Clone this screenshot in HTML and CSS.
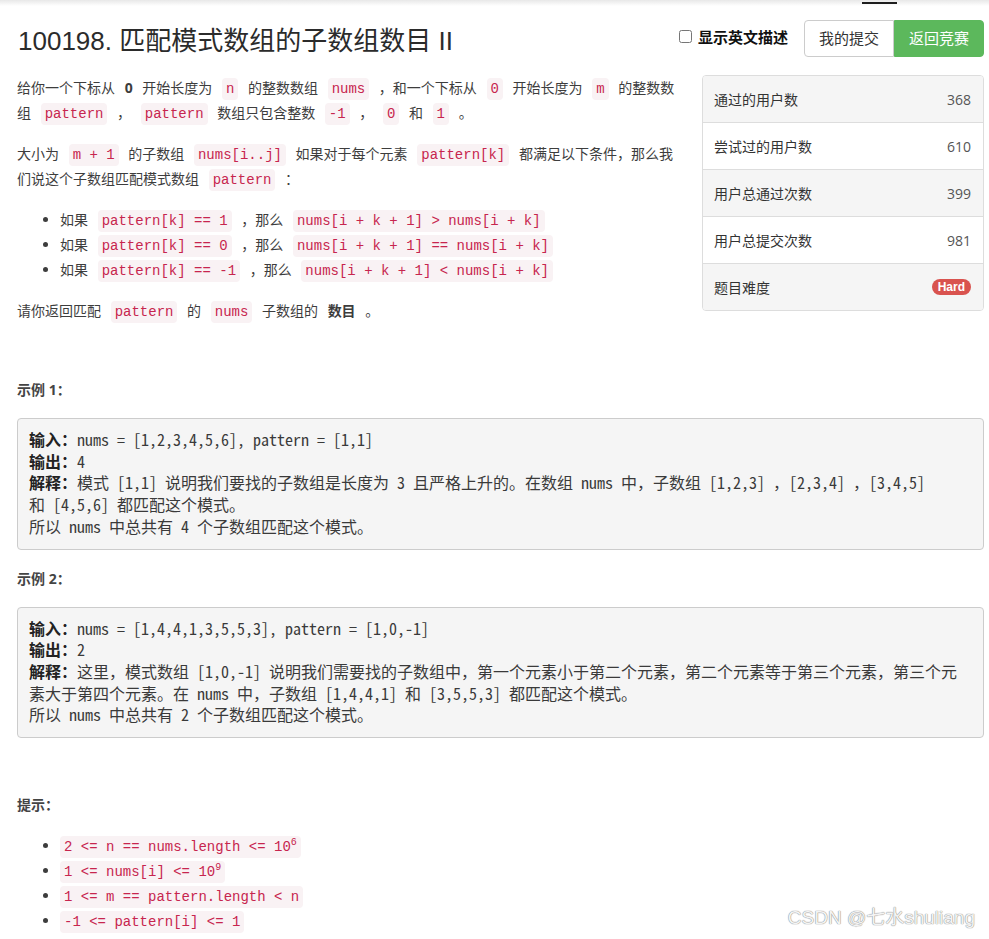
FILE: index.html
```html
<!DOCTYPE html>
<html lang="zh-CN">
<head>
<meta charset="utf-8">
<title>100198. 匹配模式数组的子数组数目 II</title>
<link rel="stylesheet" href="styles.css">
</head>
<body>
<div class="page">
  <div class="topbar"><span class="active-tab"></span></div>
  <div class="header">
    <h3 class="title">100198. 匹配模式数组的子数组数目 II</h3>
    <label class="toggle"><input type="checkbox" class="toggle-box">显示英文描述</label>
    <div class="btn-group">
      <a class="btn btn-default">我的提交</a>
      <a class="btn btn-success">返回竞赛</a>
    </div>
  </div>
  <div class="main">
    <div class="stats">
      <div class="stat-row"><span>通过的用户数</span><span class="num">368</span></div>
      <div class="stat-row"><span>尝试过的用户数</span><span class="num">610</span></div>
      <div class="stat-row"><span>用户总通过次数</span><span class="num">399</span></div>
      <div class="stat-row"><span>用户总提交次数</span><span class="num">981</span></div>
      <div class="stat-row"><span>题目难度</span><span class="badge">Hard</span></div>
    </div>
    <p>给你一个下标从 <strong>0</strong> 开始长度为 <code>n</code> 的整数数组 <code>nums</code> ，和一个下标从 <code>0</code> 开始长度为 <code>m</code> 的整数数组 <code>pattern</code> ， <code>pattern</code> 数组只包含整数 <code>-1</code> ， <code>0</code> 和 <code>1</code> 。</p>
    <p>大小为 <code>m + 1</code> 的子数组 <code>nums[i..j]</code> 如果对于每个元素 <code>pattern[k]</code> 都满足以下条件，那么我们说这个子数组匹配模式数组 <code>pattern</code> ：</p>
    <ul class="list">
      <li>如果 <code>pattern[k] == 1</code> ，那么 <code>nums[i + k + 1] &gt; nums[i + k]</code></li>
      <li>如果 <code>pattern[k] == 0</code> ，那么 <code>nums[i + k + 1] == nums[i + k]</code></li>
      <li>如果 <code>pattern[k] == -1</code> ，那么 <code>nums[i + k + 1] &lt; nums[i + k]</code></li>
    </ul>
    <p>请你返回匹配 <code>pattern</code> 的 <code>nums</code> 子数组的 <strong>数目</strong> 。</p>

    <p class="section-title spaced"><strong>示例 1：</strong></p>
    <pre class="example"><strong>输入：</strong>nums = [1,2,3,4,5,6], pattern = [1,1]
<strong>输出：</strong>4
<strong>解释：</strong>模式 [1,1] 说明我们要找的子数组是长度为 3 且严格上升的。在数组 nums 中，子数组 [1,2,3] ，[2,3,4] ，[3,4,5]
和 [4,5,6] 都匹配这个模式。
所以 nums 中总共有 4 个子数组匹配这个模式。</pre>

    <p class="section-title"><strong>示例 2：</strong></p>
    <pre class="example"><strong>输入：</strong>nums = [1,4,4,1,3,5,5,3], pattern = [1,0,-1]
<strong>输出：</strong>2
<strong>解释：</strong>这里，模式数组 [1,0,-1] 说明我们需要找的子数组中，第一个元素小于第二个元素，第二个元素等于第三个元素，第三个元
素大于第四个元素。在 nums 中，子数组 [1,4,4,1] 和 [3,5,5,3] 都匹配这个模式。
所以 nums 中总共有 2 个子数组匹配这个模式。</pre>

    <p class="section-title spaced"><strong>提示：</strong></p>
    <ul class="list list-last">
      <li><code>2 &lt;= n == nums.length &lt;= 10<sup>6</sup></code></li>
      <li><code>1 &lt;= nums[i] &lt;= 10<sup>9</sup></code></li>
      <li><code>1 &lt;= m == pattern.length &lt; n</code></li>
      <li><code>-1 &lt;= pattern[i] &lt;= 1</code></li>
    </ul>
  </div>
  <div class="watermark">CSDN @七水shuliang</div>
</div>
</body>
</html>
```

FILE: styles.css
```css
* {
  box-sizing: border-box;
}

html, body {
  margin: 0;
  background: #fff;
}

body {
  font-family: "Open Sans", "Noto Sans CJK SC", sans-serif;
  font-size: 14px;
  color: #333;
}

.page {
  position: relative;
  height: 939px;
  overflow: hidden;
}

.topbar {
  height: 6px;
  background: linear-gradient(#e8e8e8, #fff);
  display: flex;
  justify-content: flex-end;
  padding-right: 92px;
}

.active-tab {
  width: 35px;
  height: 2px;
  margin-top: 2px;
  background: #1e1e1e;
}

.header {
  display: flex;
  align-items: center;
  height: 64px;
  padding: 0 5px 0 18px;
}

.title {
  flex: 1;
  margin: 0;
  font-family: "Liberation Sans", "Noto Sans CJK SC", sans-serif;
  font-size: 26px;
  font-weight: 400;
  color: #2b2b2b;
}

.toggle {
  display: flex;
  align-items: center;
  font-size: 15px;
  font-weight: bold;
  color: #111;
  margin-right: 16px;
  margin-top: -3px;
}

.toggle-box {
  width: 13px;
  height: 13px;
  margin: 0 6px 0 0;
}

.btn-group {
  display: flex;
}

.btn {
  display: block;
  height: 37px;
  line-height: 35px;
  padding: 0 14px;
  font-size: 15px;
  border: 1px solid #ccc;
  text-decoration: none;
}

.btn-default {
  background: #fff;
  color: #333;
  border-radius: 4px 0 0 4px;
}

.btn-success {
  background: #5cb85c;
  border-color: #5cb85c;
  color: #fff;
  border-radius: 0 4px 4px 0;
}

.main {
  padding: 5px 5px 0 17px;
  color: #3d3d3d;
}

.stats {
  float: right;
  width: 282px;
  margin: 0 0 10px 19px;
  border: 1px solid #ddd;
  border-radius: 4px;
  overflow: hidden;
}

.stat-row {
  display: flex;
  justify-content: space-between;
  align-items: center;
  height: 47px;
  padding: 0 12px 0 11px;
  border-bottom: 1px solid #ddd;
  color: #333;
}

.stat-row:last-child {
  height: 46px;
  border-bottom: none;
}

.stat-row:nth-child(odd) {
  background: #f5f5f5;
}

.num {
  color: #555;
}

.badge {
  display: inline-block;
  background: #d9534f;
  color: #fff;
  font-family: "Liberation Sans", sans-serif;
  font-weight: bold;
  font-size: 12px;
  line-height: 16px;
  padding: 0 6px;
  border-radius: 9px;
}

p {
  margin: 0 0 16px;
  line-height: 25px;
}

.main p,
.list li {
  word-spacing: 6px;
}

.main .section-title {
  margin: 0 0 16px;
  word-spacing: normal;
}

.main .section-title.spaced {
  margin-top: 54px;
}

.section-title strong {
  color: #444;
}

code {
  font-family: "Liberation Mono", monospace;
  font-size: 14px;
  line-height: 1;
  word-spacing: normal;
  color: #c7254e;
  background: #f9f2f4;
  padding: 3px 4px;
  border-radius: 4px;
}

sup {
  font-size: 10px;
  line-height: 0;
}

.list {
  margin: 0 0 16px;
  padding-left: 43px;
}

.list-last {
  margin-bottom: 0;
}

.list li {
  line-height: 25px;
}

.example {
  clear: both;
  margin: 0 0 16px;
  padding: 10px 11px 11px;
  background: #f5f5f5;
  border: 1px solid #ccc;
  border-radius: 4px;
  font-family: "Noto Sans Mono CJK SC", "Liberation Mono", monospace;
  font-size: 16px;
  line-height: 21.7px;
  color: #3a3a3a;
  white-space: pre;
  overflow: hidden;
}

.example strong {
  color: #222;
}

.watermark {
  position: absolute;
  right: 14px;
  bottom: 10px;
  font-family: "Liberation Sans", "Noto Sans CJK SC", sans-serif;
  font-size: 19px;
  color: #f4f4f4;
  text-shadow: 0 0 1px #888, 0 0 1px #888;
}
```
